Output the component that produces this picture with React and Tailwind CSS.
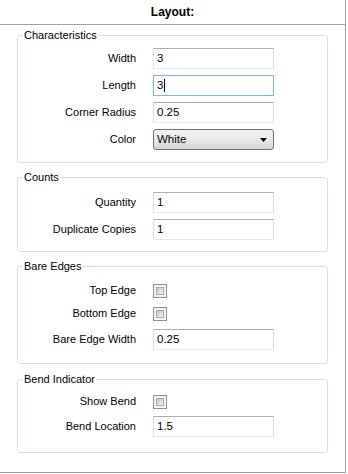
import React from 'react';

const font = { fontFamily: '"Liberation Sans", Arial, sans-serif' };

function TextBox({ value, focused }) {
  return (
    <div
      className={
        focused
          ? 'flex h-[21px] w-[121px] items-center border border-[#7eb4ea] bg-white pl-[3px] text-[11.5px] text-black'
          : 'flex h-[21px] w-[121px] items-center border border-[#dbdfe6] border-t-[#abadb3] border-b-[#e3e9ef] bg-white pl-[3px] text-[11.5px] text-black'
      }
    >
      {value}
      {focused && <span className="ml-px inline-block h-[13px] w-px bg-black" />}
    </div>
  );
}

function Select({ value }) {
  return (
    <div className="flex h-[21px] w-[121px] items-center justify-between rounded-[3px] border border-[#707070] bg-gradient-to-b from-[#f2f2f2] via-[#ebebeb] to-[#d4d4d4] pl-[3px] pr-[6px] text-[11.5px] text-black">
      <span>{value}</span>
      <svg width="7" height="4" viewBox="0 0 7 4">
        <path d="M0 0h7L3.5 4z" fill="#000" />
      </svg>
    </div>
  );
}

function Checkbox() {
  return (
    <div className="h-[14px] w-[14px] border border-[#8e8f8f] bg-[#f4f4f4] p-[2px]">
      <div className="h-full w-full border border-[#a8a8a8] bg-gradient-to-br from-[#c8c8c8] to-[#f2f2f2]" />
    </div>
  );
}

function Row({ label, children, className = '' }) {
  return (
    <div className={'flex h-[21px] items-center ' + className}>
      <div className="w-[118px] text-right text-[11px] text-black">{label}</div>
      <div className="ml-[17px]">{children}</div>
    </div>
  );
}

function Group({ title, children, className }) {
  return (
    <fieldset className={'mx-[17px] rounded-[3px] border border-[#d5dfe5] ' + className}>
      <legend className="ml-[5px] px-[1px] text-[11px] leading-[14px] text-black">{title}</legend>
      {children}
    </fieldset>
  );
}

export default function App() {
  return (
    <div className="h-[474px] w-[348px] bg-white" style={font}>
      <div className="h-[473px] w-[346px] border-r border-b border-[#a0a0a0]">
        <div className="flex h-[25px] items-center justify-center border-b border-[#a0a0a0] text-[12px] font-bold text-black">
          Layout:
        </div>

        <div className="pt-[3px]">
          <Group title="Characteristics" className="flex flex-col gap-[6px] pt-[6px] pb-[12px]">
            <Row label="Width"><TextBox value="3" /></Row>
            <Row label="Length"><TextBox value="3" focused /></Row>
            <Row label="Corner Radius"><TextBox value="0.25" /></Row>
            <Row label="Color"><Select value="White" /></Row>
          </Group>

          <Group title="Counts" className="mt-[7px] flex flex-col gap-[6px] pt-[8px] pb-[11px]">
            <Row label="Quantity"><TextBox value="1" /></Row>
            <Row label="Duplicate Copies"><TextBox value="1" /></Row>
          </Group>

          <Group title="Bare Edges" className="mt-[7px] flex flex-col pt-[7px] pb-[13px]">
            <Row label="Top Edge"><Checkbox /></Row>
            <Row label="Bottom Edge" className="mt-[2px]"><Checkbox /></Row>
            <Row label="Bare Edge Width" className="mt-[5px]"><TextBox value="0.25" /></Row>
          </Group>

          <Group title="Bend Indicator" className="mt-[8px] flex flex-col gap-[4px] pt-[5px] pb-[15px]">
            <Row label="Show Bend"><Checkbox /></Row>
            <Row label="Bend Location"><TextBox value="1.5" /></Row>
          </Group>
        </div>
      </div>
    </div>
  );
}
